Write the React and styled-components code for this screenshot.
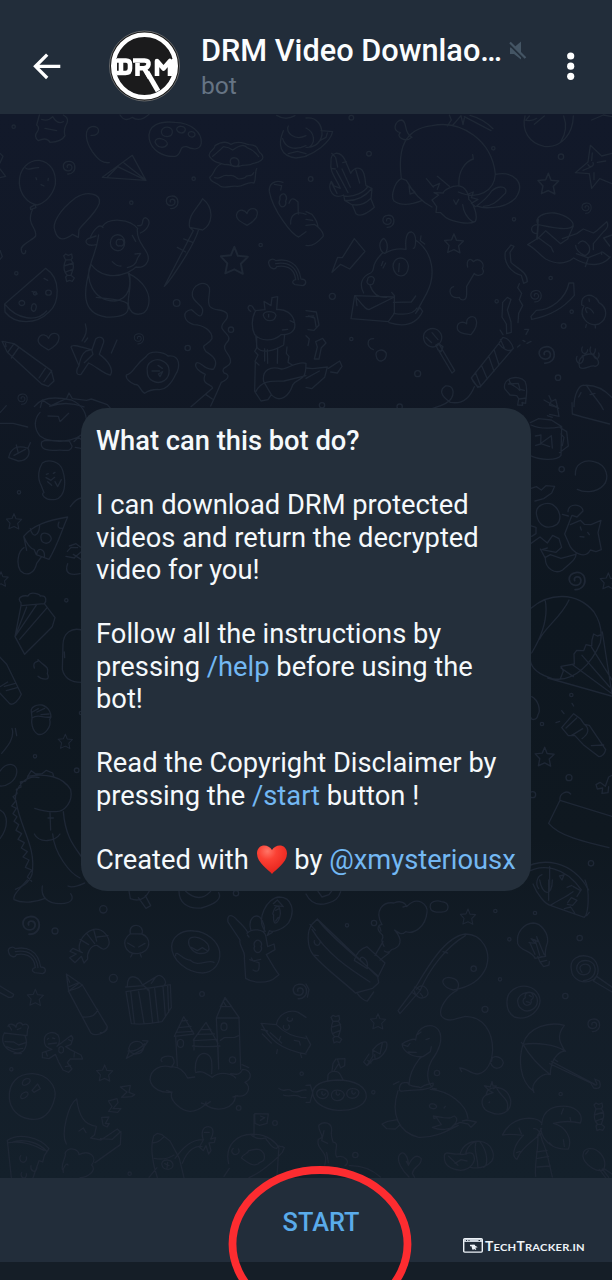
import React from 'react';
import styled, { createGlobalStyle } from 'styled-components';

const GlobalStyle = createGlobalStyle`
  * { box-sizing: border-box; }
  html, body { margin: 0; padding: 0; background: #151e27; }
  body { font-family: Roboto, "Liberation Sans", sans-serif; overflow: hidden; }
`;

const Screen = styled.div`
  position: relative;
  width: 612px;
  height: 1280px;
  display: flex;
  flex-direction: column;
  overflow: hidden;
  background: #151e27;
`;

const Header = styled.header`
  height: 114px;
  flex: none;
  display: flex;
  align-items: flex-start;
  padding: 30px 31px 0 31px;
  background: #222d3a;
`;

const IconButton = styled.button`
  border: 0;
  padding: 0;
  background: none;
  display: flex;
  margin-top: ${(p) => p.$top}px;
  flex: none;
`;

const Avatar = styled.div`
  width: 72px;
  height: 72px;
  margin-left: 47px;
  flex: none;
`;

const Heading = styled.div`
  flex: 1;
  margin-left: 20px;
  padding-top: 3px;
  display: flex;
  flex-direction: column;
`;

const TitleRow = styled.div`
  display: flex;
  align-items: center;
  gap: 7px;
  height: 36px;
`;

const Title = styled.h1`
  margin: 0;
  font-size: 30.7px;
  line-height: 36px;
  font-weight: 500;
  color: #fbfdff;
  white-space: nowrap;
`;

const Status = styled.div`
  font-size: 24.6px;
  line-height: 30px;
  margin-top: 2px;
  color: #667484;
`;

const Chat = styled.main`
  position: relative;
  height: 1064px;
  flex: none;
  display: flex;
  flex-direction: column;
  align-items: center;
  padding-top: 294px;
  background: linear-gradient(180deg, #12192a 0%, #111825 25%, #0e1720 46%, #0f1820 68%, #131d28 82%, #14202b 100%);
`;

const Wallpaper = styled.svg`
  position: absolute;
  inset: 0;
  width: 612px;
  height: 1064px;
  fill: none;
  stroke: #1e2735;
  stroke-width: 4;
  stroke-linecap: round;
  stroke-linejoin: round;
`;

const Bubble = styled.section`
  position: relative;
  width: 450px;
  height: 483px;
  padding: 16.8px 0 0 15px;
  border-radius: 26px;
  background: #242f3b;
`;

const Paragraph = styled.p`
  margin: 0 0 32.27px;
  font-size: 27.3px;
  line-height: 32.27px;
  font-weight: ${(p) => (p.$strong ? 500 : 400)};
  color: #f5f9fc;
  white-space: nowrap;
`;

const Link = styled.span`
  color: #73b8f3;
`;

const HeartEmoji = styled.svg`
  width: 32px;
  height: 32px;
  margin: -4px 0;
  vertical-align: -2px;
`;

const Footer = styled.footer`
  height: 84px;
  flex: none;
  display: flex;
  justify-content: center;
  align-items: flex-start;
  position: relative;
  background: #222d3a;
`;

const StartButton = styled.button`
  border: 0;
  padding: 0;
  margin: 29px 0 0 30px;
  background: none;
  font: 500 25.3px/32px Roboto, sans-serif;
  color: #5aabea;
`;

const Watermark = styled.div`
  position: absolute;
  left: 463px;
  top: 59px;
  display: flex;
  align-items: center;
  gap: 2px;
  height: 17px;
  color: #eef3f8;
`;

const Brand = styled.span`
  font: 700 10px/16px Lato, sans-serif;
  white-space: nowrap;
  letter-spacing: 0.2px;
  transform: translateY(1px) scaleX(1.115);
  transform-origin: left center;
  b { font-size: 12.4px; font-weight: 700; }
`;

const Marker = styled.svg`
  position: absolute;
  left: 220px;
  top: 1156px;
  width: 200px;
  height: 124px;
`;

const star = 'M0-27 7-9 27-7 13 7 17 27 0 18-18 26-14 6-27-8-7-10Z';
const spiral = 'M-3 2C-7-7 9-10 11 1 12 17-13 16-15 0-16-19 14-22 19-4 23 13 10 23-2 22';
const heart = 'M0 27C-15 18-38 8-30-9-23-25-5-18 0-8 6-29 33-27 31-8 30 9 13 20 0 27Z';
const candy = 'M-14-36-8-42 0-38 10-42 12-30 8-25Q20-10 12 10L8 22 18 30 12 40 3 37-5 41-8 27-3 22Q-20 5-8-24ZM-8-24 8-25M-13-6 15-15M-10 13 14 3M-3 22 8 22';
const chick = 'M-17-28C-25-63 27-60 18-27 48-16 46 27 5 32-33 34-48-5-17-28ZM-17-28 18-27M-25 0-5 12M27 1 8 12M-12 34-16 42M13 34 16 42';
const rainbow = 'M-60-22C-65-35-48-43-40-33-8-40 28-30 36 22 52 22 55 36 42 42L18 39C6 33 12 25 20 24 16-15-15-20-37-15-41-4-57-9-60-22ZM-40-24C0-31 24-12 28 24';

const sheets = [
  {
    x: 0,
    y: 110,
    paths: [
      'M118 15 110 45Q120 53 112 65 100 80 115 92 140 80 150 97 185 96 195 77 190 60 198 45 210 25 190 15M125 28Q145 35 158 20 173 45 190 35M135 55 170 62M360 15Q375 38 397 22 420 38 447 13',
      'M273 76C303 80 303 45 275 50 250 57 257 95 277 125 295 150 307 160 328 158M307 202 397 136 438 211ZM353 170 438 211 372 159M353 170 323 200',
      'M448 88C440 45 480 32 525 37 575 39 606 67 604 99 600 123 575 118 560 110 535 107 548 132 526 139 487 142 454 119 448 88ZM484 66C485 45 520 48 517 67 516 84 486 84 484 66M530 58C530 45 557 46 556 60 552 74 533 70 530 58M565 74C563 61 585 63 585 75 582 84 569 84 565 74M465 96C467 76 504 88 502 103 493 117 472 114 465 96',
      'M629 140C620 125 647 118 645 107 670 90 684 98 693 103 717 88 735 103 747 104 780 105 770 125 784 132 798 147 777 158 760 160 747 170 734 162 720 168 701 175 691 160 675 164 653 157 642 158 629 140ZM663 162C640 172 646 190 629 202 632 220 652 216 660 228 675 238 691 225 711 229 730 231 742 213 762 219 770 205 763 188 770 176M638 139Q660 121 670 110 687 112 698 120 731 97 741 113 760 119 776 140M644 203C670 210 660 192 685 197 714 190 699 216 735 203 741 190 754 205 761 188M691 157C688 138 716 139 717 158 715 175 695 173 691 157',
      'M850 62C833 103 839 138 888 144L918 139M865 48C854 66 884 94 918 77M848 86C855 113 883 123 918 107M830 16Q857 33 885 17M865 131 892 124 918 131',
      'M58 220C56 174 88 150 118 151 151 157 169 184 166 223 158 257 133 281 111 285 80 279 61 252 58 220ZM105 284 91 292 92 299 108 293ZM98 297C77 345 111 350 107 378 98 391 58 405 64 421 66 437 78 432 77 422M77 174C82 183 100 172 116 173M108 203 110 209M145 205 144 212M123 224 132 228',
      'M165 363C155 342 177 301 226 264 261 241 304 250 298 280 287 312 247 342 237 359L235 382 218 373C196 390 174 396 165 363Z',
      'M288 404C252 412 252 386 270 384 285 350 301 342 309 353M270 384 288 378M307 350C324 321 391 326 413 356M413 347C437 350 420 326 436 323 458 333 444 359 421 369M296 375C290 423 278 438 272 463M412 358C410 391 430 407 441 429 453 453 435 476 408 471 396 482 387 485 382 488C337 507 296 494 273 463 250 542 241 609 318 621 362 623 394 614 382 580 362 566 322 567 289 562M272 463C253 504 279 574 344 573 390 567 395 520 385 490 426 510 455 547 445 587 436 622 392 620 387 590 377 568 398 540 388 490M331 399C331 367 373 366 374 397 375 431 333 430 331 399M360 389A8 10 0 1 0 360 407 8 10 0 1 0 360 389M397 376 407 394M405 432 422 430 413 444M413 444C407 466 397 469 382 473M337 455Q351 470 363 468',
      'M569 352C561 318 594 293 608 266 645 296 637 343 608 360ZM569 352 580 362 493 529C505 520 582 409 595 361M551 387 578 397M532 412 557 426',
      'M849 217C822 208 806 223 808 245 819 302 876 375 896 381L918 365M823 223 845 227 842 240M840 269A10 13 0 1 0 857 273 10 13 0 1 0 840 269M867 280Q875 255 894 276L895 312M872 342C870 310 894 303 918 313',
      'M14 582 137 475C184 505 179 578 147 606 109 644 46 645 15 606ZM14 582C52 630 111 637 140 603M132 505 143 511M96 544 112 552M137 548A8 7 0 1 0 154 548 8 7 0 1 0 137 548M57 579A8 7 0 1 0 74 579 8 7 0 1 0 57 579M95 590A7 9 0 1 0 108 595 7 9 0 1 0 95 590',
      'M6 694 42 701 154 782 162 813 145 829 125 822 22 727ZM42 701 24 726M55 714 34 744M155 782 132 815M16 696 18 710M136 775 117 804',
      'M287 687C300 675 313 685 311 697L298 733C325 751 342 781 331 795 318 796 283 766 266 759L243 793C226 798 228 779 237 767L213 711C215 702 237 709 276 719ZM237 767C240 748 247 731 258 723L275 719 279 733 253 758M256 642C263 663 257 676 246 693M263 684 254 696M351 690 334 729',
      'M438 740C450 718 493 727 504 738 543 733 540 774 527 793 514 823 493 843 473 838 456 839 448 840 434 850 419 843 419 819 405 824 391 818 376 806 379 795 400 792 402 766 438 740ZM442 786C436 754 470 742 490 754 513 765 512 798 494 811 468 828 441 807 442 786M456 783 479 783M474 766 487 775M475 792 488 785 480 800Z',
      'M577 557C573 524 616 507 628 533 632 551 619 575 630 590 645 606 670 594 681 611 690 632 660 635 666 655 678 674 698 681 679 699 660 721 698 735 691 758 689 772 660 770 672 789 690 793 688 807 664 817L650 849 632 888 M577 557C581 579 612 586 608 604 603 635 585 605 574 599 546 603 548 633 581 644 609 645 637 661 636 686 620 713 600 698 618 725 652 745 651 761 641 777 614 784 601 750 589 759 580 772 601 786 616 793 601 825 636 822 638 834L573 890M618 854 637 867',
      'M752 604C744 600 741 591 749 586 763 586 757 598 767 602L795 599 792 574 813 587 816 563 833 560 830 599C857 596 878 612 883 635 891 665 868 674 843 674 817 697 782 693 764 674 754 654 754 624 767 602M767 675 771 712C786 733 823 722 851 705L854 673M770 681 770 714 764 724 774 735 765 754 777 765 M794 716 794 753M833 714 832 760M802 719 803 760M861 711 859 730 867 739 864 757 877 765M766 754 764 844 783 873 804 869 814 854C839 881 868 858 878 825 897 798 918 820 918 760 891 752 860 779 844 777 812 767 785 779 791 815L814 854M768 844C788 805 827 816 853 813M852 813 918 797M790 616C789 601 824 601 828 616 823 638 796 637 790 616M806 613 806 621M870 632 881 637M847 660 863 658',
      'M121 892 127 870 153 887 200 865 207 849 217 866 260 871 274 867 322 884 333 897M149 889Q200 871 252 891',
      'M0 130 9 139 0 159M0 177 17 199 0 203M0 421 7 440 0 448',
    ],
    marks: [
      [spiral, 205, 170], [spiral, 514, 274], [heart, 741, 319], [star, 703, 451, 1.5], [candy, 205, 474],
      [heart, 146, 693], [spiral, 415, 684, 0.8], [spiral, 66, 865, 0.8], [rainbow, 867, 485],
    ],
    dots: [[41, 50], [394, 278], [581, 206], [782, 405], [49, 490], [530, 579, 10], [693, 659, 8], [563, 714, 8], [105, 550, 5]],
  },
  {
    x: 306,
    y: 110,
    paths: [
      'M0 24C34 20 49 47 48 75 42 105 17 114 0 112M45 62 80 65C71 103 19 131 0 138M0 54C27 67 29 99 9 112M64 69 60 82 43 91',
      'M286 206C266 215 253 259 264 273 286 289 320 283 347 272M286 206C274 112 297 57 378 47 469 28 558 95 568 192 566 243 515 272 457 246M315 83C298 98 268 80 283 68 257 64 267 31 287 30 306 35 291 70 318 82M286 206 301 211Q333 269 378 291M309 228 327 247 312 252ZM459 228C455 181 480 154 502 147M502 147 500 134M568 193C621 183 661 217 629 264 599 295 551 294 531 293L512 288C528 276 545 263 557 243 578 224 607 229 598 250 581 264 566 289 532 289M361 206 382 231M394 199 430 229M381 229 401 220 394 238M378 270 398 255 384 248 412 249C413 240 439 226 460 228 479 231 490 254 488 268 501 278 517 316 508 334 486 348 435 332 420 323L404 308 390 307 392 290ZM487 252 502 246 496 263 516 268 496 280 509 290M443 270 450 283 458 268M424 48 436 30 430 15M441 45 465 17 471 44 475 24M475 20 555 62M492 16Q531 26 561 56M470 284Q474 319 502 337',
      'M657 18C646 62 669 99 714 109 768 116 801 69 802 18M670 18 659 31M685 43 715 18M773 18Q788 58 764 96M662 31Q680 34 692 25',
      'M853 106 887 138 918 130M853 106 846 156 808 188 850 191 857 235 881 206 918 221M859 129 857 151M831 181 855 171M864 209 864 188M874 157 899 153M846 163A8 8 0 1 0 861 158',
      'M75 156C72 125 102 119 118 152L134 190C147 167 168 171 174 192 181 216 176 229 184 228L198 236 195 267 205 292Q168 325 150 311L139 285 116 271 113 255C81 270 63 236 76 214L84 228 103 235C89 202 70 186 75 156ZM89 143 95 171M108 177 133 232M91 182 126 248M149 179 161 219M75 215 93 250M114 258C145 263 175 246 186 229M116 271C154 275 179 257 196 237M140 284C162 288 181 278 193 266M87 140 77 130M76 175 88 177M121 155 110 158',
      'M0 305 18 313Q35 334 36 351 55 368 51 380 23 412 0 406M0 328 20 331M0 346 25 343 37 352',
      'M145 386 177 424 131 477 104 463 78 487 95 442 109 443Z',
      'M233 385C213 398 223 426 235 430 M233 385C250 399 244 427 235 430M236 430C254 420 275 414 300 418 297 390 301 364 317 366 335 373 329 414 322 415M329 390C383 428 390 497 362 550 M345 378 343 392 356 402M229 430C187 470 213 477 194 489 166 500 159 524 173 549M261 469C262 438 302 434 307 467 309 505 265 510 261 469M280 460 278 485 M226 467 231 454M231 474 239 459M185 510A10 9 0 1 0 203 514 10 9 0 1 0 185 510M192 526Q205 565 242 562M257 547 266 558M146 557 265 561 265 610 247 635 135 626ZM146 557C167 581 180 602 190 598L265 561M150 565 153 587M262 577 316 576 329 558M263 610C303 617 324 609 333 594 M362 550 329 610 342 593 350 604Q323 661 249 638',
      'M485 471C480 450 493 441 502 455 520 439 538 463 529 475 542 496 511 502 505 490L482 529 482 551C482 577 462 571 460 562 431 568 423 535 443 530 459 530 461 546Z',
      'M598 426 615 405 624 409 612 427 615 457C632 476 664 483 664 515L653 520 646 496C617 488 592 461 598 426ZM675 619 691 601C734 601 780 565 789 519L803 519 805 556C779 587 736 617 677 628ZM590 577 604 562 615 568 604 600 615 636 616 667 602 671 601 642 588 621ZM640 521 635 533 647 550 640 569 650 586 638 610 636 638M656 658 668 658 660 673M635 711 642 705M651 691 657 695M663 700 675 694',
      'M578 701 590 683C605 681 619 702 622 715L522 831Q508 830 496 804L578 701ZM578 701C591 718 611 729 622 715M564 718 579 765M548 738 564 784M526 765 544 807M508 787 524 828M496 804 516 833M583 688 595 714M505 830C489 870 464 883 433 877 403 857 400 840 418 828 442 825 446 847 436 865 427 883 395 890 374 897M591 674 582 660',
      'M353 686C349 659 379 650 395 660 413 675 410 694 394 707 376 717 356 706 353 686ZM389 706 398 700 446 782 438 789ZM378 668 396 689M360 682 377 698M400 702 411 710 405 725 395 719',
      'M697 344C681 321 715 306 746 309 782 315 804 335 801 347 790 365 734 351 697 344ZM697 344C671 343 670 371 694 371M697 328 692 387 665 404C687 415 697 431 719 447 746 461 774 467 803 444 850 473 889 468 913 441M697 344 694 381 735 411 742 426M694 387 719 362 764 401 785 387 802 348M769 386 812 371 832 357 862 369 874 361 902 335Q912 350 891 367L862 401 862 419M817 401Q831 382 849 408 856 428 837 437 809 425 809 406M893 384 918 375M893 384 911 408M838 470 847 443 890 426 911 442M887 433 886 426M811 431 845 443',
      'M827 585C822 553 862 543 878 577 905 592 907 626 879 642 846 652 816 619 834 588ZM843 608C829 584 852 592 863 609M850 574 849 567M841 644 839 652M868 644 868 654M878 574 870 564',
      'M821 772C812 744 836 731 854 732 877 741 886 765 868 769 854 762 835 784 821 772ZM813 739A10 14 0 1 0 829 737M829 711A9 12 0 1 0 845 719M854 711A8 13 0 1 0 868 717M864 731A8 11 0 1 0 878 729',
      'M211 739C204 720 231 713 241 730 242 755 214 762 211 739M202 719C180 711 182 685 203 686 222 708 219 714M222 718C200 695 233 670 252 677 269 689 246 719M240 718C250 696 281 687 290 711 286 733 247 724M247 736C277 733 298 744 285 766 267 774 246 762 239 748M239 754C259 767 282 789 261 798 240 803 231 772 235 764M221 755C235 785 218 810 203 801 184 793 205 760M213 748C202 777 173 785 174 764 178 747 196 742 207 744M207 732C183 724 154 735 167 747 178 747 194 739 210 742M207 793 194 823M146 825 187 830 222 814 247 820 226 831 209 844M141 830 152 838 191 840 225 840M145 838 153 890M206 859 212 888M142 790C137 789 139 831 180 822 180 802 159 797 142 790M188 825Q188 814 208 805',
      'M596 836C589 803 638 792 657 814 668 839 659 859 659 880L648 877 650 886 635 885 638 866 632 857 612 855ZM610 807C606 825 634 829 641 841M607 822 637 820 642 838 655 841M640 867 661 864',
      'M804 890C804 854 819 823 835 826 866 824 896 839 918 863M842 827C868 869 881 874 892 899M825 848 818 861M852 854 867 850M729 857 736 873 730 885 755 892 749 868 739 873M857 30 892 15 918 20',
      'M0 602 31 606 39 645 24 661 6 659M7 618 26 624 30 650M0 620 23 618M0 677 10 687 6 707M50 685 60 699 46 713 39 747 25 747 34 711 29 695ZM0 774 20 776 64 771 56 802 17 836 0 832M67 775 101 753 108 769 94 789 74 786M0 805 40 783',
    ],
    marks: [
      [star, 727, 221, 1.15], [star, 444, 400, 1.05], [heart, 485, 649, 1, -22], [spiral, 245, 331, 0.95], [spiral, 840, 292, 0.8],
      [spiral, 688, 556, 0.9], [spiral, 719, 731, 1.3],
    ],
    dots: [[136, 23, 7], [189, 131, 7], [14, 207, 7], [562, 115], [765, 140, 8], [624, 328], [734, 504], [79, 559, 9], [572, 574], [797, 605], [773, 648, 7], [136, 687, 5], [335, 791, 9], [756, 803, 8], [48, 886, 8], [281, 890, 8]],
  },
  {
    x: 0,
    y: 400,
    paths: [
      'M103 20C126-12 178-8 214 0 248 15 267 44 257 92 229 130 152 132 119 107 99 81 104 55 120 37M125 126C119 149 141 151 169 151 193 148 213 159 216 139M125 126 134 121 208 123 216 138M144 48 175 49 180 65 206 40M222 125 235 112 250 123 247 146 226 142M0 70 39 70 83 81M0 38 19 17',
      'M26 173C31 147 49 133 84 145 93 160 82 184 55 183ZM84 145 91 128M42 166 76 148M54 156 49 135',
      'M124 257C109 231 118 203 127 189 145 176 180 183 188 211 200 248 195 291 167 298 134 304 120 280 132 278ZM139 223 145 221M160 220 165 217M138 233 153 241 164 232M165 245 173 260 184 239M143 245 155 256',
      'M71 409C100 374 144 361 203 351 185 391 174 433 147 478L109 464 102 448Q87 447 71 409ZM91 386C97 416 117 409 119 377M110 463C113 438 136 447 133 471M123 407C126 393 151 399 154 416 151 436 120 435 123 407M177 366Q168 387 189 385M72 443C54 453 48 491 61 512 81 532 104 519 110 490L124 471M71 409 80 451M211 320Q228 295 244 294M202 454 213 442 233 443M208 438 228 431 241 441M198 469 223 474M222 474 243 456M203 491C191 523 215 526 240 521M220 463 243 478',
      'M63 608C48 593 68 585 84 588 92 572 120 583 121 588 142 585 139 605 133 611L63 617ZM63 617 45 710 74 763 157 680 165 653 133 611M45 710 110 614M59 718 142 622M45 710 80 621',
      'M103 804C95 780 119 789 114 779 131 799 149 798 142 821 155 846 122 837 114 829 103 821 107 811M115 788 112 777M120 806 138 830',
      'M0 772 20 793 64 883C57 900 40 918 29 911L0 880M13 859 46 850M19 872 54 862M0 860 23 846M246 690C213 681 190 700 189 733L187 808C194 838 220 847 244 847M193 756 194 773',
      'M94 935C91 922 109 912 126 915 150 922 153 944 153 951L149 958C156 982 132 1007 114 1003 94 991 94 963 96 954ZM96 954C116 939 128 956 151 951M97 936 115 926M111 936 134 925M123 944 147 942',
      'M36 985C45 1013 23 1039 5 1060M46 985 50 1007M0 1113C24 1081 54 1092 50 1119 46 1145 18 1160 0 1158M0 1230C25 1243 26 1280 0 1316',
      'M83 1129C137 1119 188 1129 212 1169 220 1207 193 1234 168 1235 144 1236 119 1230 104 1225M46 1205C44 1150 86 1124 117 1133M48 1202C59 1284 110 1337 96 1423 87 1450 65 1460 46 1468M83 1132 77 1143 61 1146 63 1161 49 1168 51 1181 39 1190 48 1202 35 1218 49 1225 39 1241 51 1250 42 1264 56 1274 48 1291 65 1301 54 1318 73 1328 64 1344 82 1355 69 1371 87 1380 76 1402 95 1410 82 1431 95 1444M83 1129 94 1112 107 1122 126 1121 139 1111 158 1119 161 1129M150 1239 152 1290M144 1254 160 1254M190 1235C196 1310 223 1340 245 1371M158 1302C163 1360 209 1420 240 1434 M103 1302C119 1332 166 1324 180 1302 184 1293 169 1290M198 1266 214 1256 230 1277 216 1291 200 1284M207 1255 222 1274M181 1155 189 1161M145 1175 156 1193M219 1465 269 1451',
    ],
    marks: [[star, 42, 364, 0.85], [star, 196, 1024, 0.8], [star, 3, 537, 0.8]],
    dots: [[57, 277], [199, 601, 5], [105, 1069], [230, 1111, 7], [243, 939, 5]],
  },
  {
    x: 522,
    y: 400,
    paths: [
      'M150 8 151 42 182 51 263 72M66 0 110 25M83 43 111 49 105 16M76 47 91 52',
      'M25 68 50 56 88 60 119 80 117 166C102 185 50 179 25 167M115 83 134 95 139 138 112 158M117 102 126 112 121 137M27 75C60 91 98 84 119 80M40 108 57 105 56 132 41 136M58 129 88 107 91 144M57 131 83 140',
      'M160 225C158 189 190 178 216 185 257 195 262 235 245 255 221 283 180 276 166 268 156 255 158 240M215 185 211 165 222 172 219 151 238 175 263 163 247 187 263 194 237 196M184 203 184 207M208 199 209 204M232 205 232 211M175 228 175 234M198 220 198 227M222 228 222 235M247 224 247 231M183 249 183 255M208 245 208 252M231 251 231 258M195 264 195 267',
      'M25 266 43 260 58 270 72 257 98 259 89 279 65 296 39 303M44 346C37 313 74 306 91 313 117 330 119 359 105 373 76 392 50 377 44 346M25 377 42 382 42 401 29 409M27 430 54 411 76 429 92 406 111 416 119 442 102 457 60 449 76 444M55 447 69 473 85 464 117 475 161 463M70 471C68 507 101 524 122 510 142 491 165 477 162 459M138 335C139 307 182 311 183 333L165 351 150 346 141 368 128 402 140 429M145 374 175 361 187 373 207 374 237 361 228 398 238 449 222 455 205 450C190 479 150 459 140 430M175 381 178 390M174 410 186 411M197 397 202 404M121 343 139 348',
      'M28 624C80 579 164 573 216 636 231 659 243 689 235 728 211 786 159 849 91 836 52 824 28 804 25 782M70 603C80 660 50 724 29 759M141 600C117 652 71 680 53 717M235 705 226 708 215 702 210 720 209 738 192 734 185 752 164 751 156 762 157 792 117 799 124 813 115 836M241 696 270 882M209 742 270 840M150 793 268 880M180 766 263 861M77 834 268 888M117 804 154 830',
      'M29 890C49 900 57 931 48 944 45 963 27 960 27 953M119 983 155 941 175 956 187 973 202 976 251 1049Q246 1070 231 1070L184 1034 158 1006 139 1007ZM132 984 164 954M182 986 148 1007M187 973Q211 993 180 1016M208 1037 245 1035M119 932 126 941M113 964 102 968M150 910 155 918',
      'M222 1154 234 1147 250 1159 260 1131 270 1126M222 1154 226 1167 242 1164 240 1180 258 1178 260 1160',
      'M80 1270 114 1201 270 1249M80 1270C110 1307 185 1326 261 1343M114 1201C111 1182 134 1168 146 1182 140 1202 124 1200M140 1199 129 1230M151 1202 158 1223M178 1204 148 1225 97 1225M100 1240 135 1259M177 1298 184 1246 225 1231M196 1223 230 1289M180 1267 212 1268M178 1297 194 1298M207 1288 200 1310M84 1262 116 1280M135 1201 151 1205M123 1219 163 1212',
      'M0 1408C60 1370 150 1380 200 1470M10 1420C60 1388 130 1400 178 1470M83 1400 83 1470M60 1424A22 26 0 0 0 50 1466M112 1428 126 1425 120 1440ZM135 1462 150 1456',
    ],
    marks: [[spiral, 162, 539, 1.35], [star, 68, 1070, 1.05], [star, 259, 543, 0.9]],
    dots: [[119, 208, 8], [148, 885], [60, 972], [141, 1133, 9], [32, 1184, 9], [207, 1390, 8]],
  },
  {
    x: 0,
    y: 880,
    paths: [
      'M82 0C60 25 38 45 42 59 70 73 112 65 135 55M127 18C121 53 145 72 183 71 213 70 223 58 212 41M204 18C218 26 239 16 254 9',
      'M387 33 391 56Q430 70 448 33M415 53 438 85 452 77 436 47M537 34C537 65 559 88 604 84M656 38Q671 65 604 84M557 34Q597 71 632 34',
      'M247 218C225 211 242 159 281 148 311 144 330 173 327 193 316 218 302 204 291 196 272 195 260 219 263 237L252 249 244 229 225 248 209 233 229 222 210 214 219 205ZM240 178 266 194M260 160 284 191M281 149 290 183M291 171 324 167',
      'M515 199C516 173 542 148 583 153 618 155 654 182 659 215 663 250 642 276 608 279 560 278 514 239 515 199ZM566 184C566 165 601 167 623 192 635 214 618 223 595 220 578 217 564 197 566 184ZM574 202 592 212 607 203 623 213M527 227C526 205 551 243 570 240 594 264 622 237 642 247 654 247 657 222M538 190 544 198M553 232 560 225M617 250 626 253M568 263 573 267M543 179 550 172M635 199 640 209M528 180 528 187',
      'M720 180 684 126C680 99 698 104 712 121 729 137 740 148 743 158M753 151C742 117 764 102 779 111 793 125 796 149 791 158M741 160C758 143 790 148 797 166L803 200 822 192 825 209 799 224C816 252 827 272 837 284L828 291C806 313 757 309 737 295L733 234C738 214 715 197 720 180M764 199A11 12 0 1 0 783 199 11 12 0 1 0 764 199M754 234 760 243 782 238M749 239 774 247M777 248Q781 283 759 270M742 165 747 171M796 154C767 118 800 53 838 51 875 52 887 92 866 128 848 150 817 158 808 152L802 166 817 157M818 102C826 72 841 71 841 102 836 131 818 144 821 104M820 71 832 60 850 80M823 77 847 79M827 91 837 86M827 123 835 112',
      'M378 335 487 318 511 314 514 383 486 425C456 431 419 434 394 431L378 335ZM382 317C382 276 415 288 426 313M431 313 474 287C482 281 509 307 490 318M428 313 445 332M392 333 403 430M416 335 432 430M447 330 458 429M464 326 475 427M489 319 496 408M503 319 506 397M377 321 430 317 446 328M466 293 454 310',
      'M199 282 247 315 322 440C318 461 286 471 272 458L206 334ZM202 291 209 307M205 334 239 308M206 334C223 323 228 332 247 315M249 411C274 413 289 403 293 388M301 458C313 460 323 450 322 440M208 320 233 309',
      'M24 440C27 425 45 435 48 442 49 425 65 425 68 435 82 427 89 440 83 447L81 466M13 459 81 467M13 459C0 484 13 510 45 517 78 527 84 488 75 467M28 438 35 450M52 449 63 444M15 485 41 486 56 495 80 487M20 500 42 509 68 505M42 521 64 521',
      'M133 478C135 455 161 453 174 465 182 480 177 493 171 499L214 466 219 475 213 493 197 500 211 509 243 525 248 537 211 537 202 548 216 567 206 577 189 570 175 544 166 523 147 536 127 533 127 518 156 508C137 503 132 496 133 478ZM142 478 146 475M158 474 164 476M145 492 170 489M177 509A7 7 0 1 0 190 510 7 7 0 1 0 177 509M196 560 212 557M222 531 223 519M206 479 214 483M138 517 142 528',
      'M386 506C391 480 424 476 432 501 426 528 395 528 386 506ZM428 482 444 483 426 509 379 535 387 517M384 513Q409 517 434 491',
      'M523 469 551 410 582 462 523 469ZM544 423 562 421M535 443 573 439M528 457 579 454M580 480 618 427 654 490M602 449 633 448M591 463 643 462M580 482 652 478M577 498Q620 502 660 498M649 414 675 352 718 414ZM661 380 675 355 695 379ZM669 363 679 379M649 414 656 564M717 414 722 568M527 470 532 558M582 476 582 510M586 574C584 540 595 520 614 520 640 525 636 553 635 581M661 481 673 473 704 472 718 466M654 498 656 567M533 490A9 9 0 1 0 550 490 9 9 0 1 0 533 490M663 440A9 11 0 1 0 681 440 9 11 0 1 0 663 440M688 540A9 9 0 1 0 707 540 9 9 0 1 0 688 540M486 545C475 536 498 523 517 531 528 546 520 556 513 561M513 561C482 552 451 568 450 599 454 626 486 641 516 636 505 659 542 691 569 694 593 695 607 682 616 674 650 698 703 689 707 647 745 656 756 618 735 607 761 593 752 569 728 568 718 590 705 581 692 581M563 594C550 569 531 558 513 561M563 594 584 591M587 578C606 570 618 581 637 592 662 570 700 584 707 594M726 554 746 563M513 636 500 631M616 675 618 666M699 651 713 647M604 669 618 674 631 665',
      'M783 430 829 434C835 400 869 387 895 397L918 412M784 431C809 479 842 509 918 522M829 434Q863 470 918 475M787 462 814 489M832 509 830 520M901 520 905 533M811 458 845 489M842 469 838 479M851 437A9 9 0 1 0 866 435M864 413A8 6 0 1 0 877 416M883 481 898 484 901 495M784 448 803 453',
      'M28 655C25 610 53 580 98 581 143 583 169 618 165 650 155 700 127 724 88 717 51 711 31 686 28 655ZM67 609C71 591 99 593 88 608 78 618 66 619 67 609M96 631 113 612 121 626 102 637ZM62 650C65 635 90 630 83 646 73 658 62 659 62 650',
      'M230 657C206 671 181 761 199 792 M230 657C237 709 253 735 289 739L284 764 272 774 303 780 352 747 363 758 361 794 285 848M301 776 337 778 363 754M187 869C183 845 202 827 195 820 206 797 236 808 237 824 268 808 294 831 275 855 292 873 261 893 240 893 M204 855C201 846 187 863 190 877M237 753 250 744 258 758M361 621 391 616 387 637 404 644 395 650 365 652 381 636ZM325 663 351 656 354 668 339 686 363 686 353 697 326 694 336 680ZM305 712 327 711 316 731 328 731 321 741 309 735Z',
      'M22 781C56 758 118 770 147 806L133 827 128 846 117 842 99 893M22 781 34 893M26 788Q78 780 132 811M39 786C77 775 119 790 139 813M62 827A10 12 0 1 0 79 831M93 857A8 12 0 1 0 111 863M65 878A8 10 0 1 0 79 881',
      'M461 768 472 760 486 764 510 783 538 835 552 893M461 768C451 799 457 830 462 858L472 893M458 788C476 790 487 775 492 770M463 835Q496 842 522 825M485 852C488 835 514 837 519 853 520 873 489 874 485 852M494 851 507 857M503 847 501 864M471 863 447 892M525 835C553 797 576 779 609 779M547 850C563 808 587 796 606 800M607 768C603 735 634 735 638 749 642 765 632 774 632 777L647 773 643 787 627 789 633 812 626 822 618 797 610 812 598 801 610 780ZM613 757 628 757',
      'M764 701 805 702 801 730 779 736 765 730ZM762 703 762 768M781 708 794 713 781 721M686 851C673 797 711 759 764 763 802 762 829 789 837 804 833 839 834 867 830 893M700 805A11 10 0 1 0 715 807M724 834C732 818 739 826 747 812 770 805 783 805 792 822 798 849 782 842 774 852 753 861 740 844 724 834M753 764C779 789 798 765 799 779 811 790 814 805 830 805 838 790 840 804 846 799L853 803 847 817C822 845 780 879 747 893M688 865 672 889',
      'M0 318 41 343Q40 354 26 352L0 338M837 625C850 640 862 621 875 633 890 643 903 627 918 630M850 645C867 654 887 637 902 652L918 653',
    ],
    marks: [
      [spiral, 90, 132, 1.4], [chick, 408, 189], [rainbow, 86, 239], [star, 106, 352, 0.9], [star, 314, 579, 0.9],
      [spiral, 897, 331, 1.15],
    ],
    dots: [[310, 88, 11], [165, 153, 9], [340, 295, 12], [606, 342, 7], [34, 568], [716, 684, 7], [389, 881], [905, 581], [825, 729, 7], [708, 40, 8]],
  },
  {
    x: 306,
    y: 880,
    paths: [
      'M0 42Q20 82 63 70 96 64 104 35M36 34 48 51 69 44 77 33M0 312 9 329 4 351M0 468 14 494 0 518',
      'M34 117 18 133C2 152 2 201 22 225 60 269 118 309 148 339L200 325 218 308 215 290ZM34 117C71 170 163 240 217 289M18 148C62 221 126 263 192 306M22 225 37 227M12 133 28 151M25 182A9 11 0 1 0 42 181M154 340C162 354 178 364 184 363L203 336M145 241C152 215 170 204 183 200M145 241 184 266C189 233 160 223 163 240M183 200 237 249 216 291M207 226 231 185M222 240 250 218M234 199C219 171 234 183 230 166 205 144 220 133 228 134 203 91 232 64 264 69 284 60 299 69 302 80 334 45 368 74 363 97 359 139 325 164 299 155 284 168 278 157 266 150 292 180 285 202 257 209 248 221 239 216 235 213M221 141 225 153M305 77 291 81M375 89C363 61 397 61 406 65 432 67 430 90 415 95 398 98 381 95 375 89',
      'M282 401 276 392 331 318C366 259 419 169 478 162 530 162 556 215 541 261 524 303 484 323 442 330 406 321 401 295 427 292 454 294 464 309 453 331 421 347 395 389 407 409 418 421 430 424 452 416L478 409C532 410 560 454 560 510 558 548 542 578 515 582 495 583 480 563 461 564M282 401 342 332C372 264 421 201 478 167M331 328C352 299 378 340 360 350 343 361 327 347 325 333M343 340 350 349M557 544C555 520 590 530 592 548 588 568 563 572 554 549M461 564 467 575M325 321 344 330M317 336 333 348M411 215 425 219',
      'M635 190C630 157 654 130 682 129 706 130 727 159 725 186 720 200 715 214 719 229L687 235C678 210 643 215 635 190ZM687 235 709 229M695 229 702 246 722 241M703 247 713 260 729 255 730 245M671 187 687 223M687 179 701 226M669 188 688 190 675 176 696 185 692 170 715 225',
      'M796 268C790 235 820 223 846 229 877 236 886 279 864 297 834 317 797 299 796 268M828 277C805 251 855 243 853 266 852 293 812 288 812 265 813 234 860 235 866 260 873 284 854 301 832 302M862 303 872 289 919 322M862 303 918 336',
      'M603 365C602 335 633 314 663 319 697 326 710 357 697 382 681 410 650 420 625 411 608 400 602 383 603 365M635 362C637 337 682 325 693 354 700 382 669 404 646 386 636 379 635 373 635 362M658 353A12 12 0 1 0 675 360 12 12 0 1 0 658 353M670 346 676 350M661 365 670 367',
      'M288 492C298 484 327 473 329 480 331 440 378 424 397 449 415 476 397 515 377 541 366 561 358 593 375 618M288 492C290 514 319 533 351 530L373 515 376 500M350 530 341 535C315 569 309 591 309 614M289 494 305 499 312 490M307 516 331 517M360 479 370 475M336 463 345 456M280 625C282 608 291 607 305 607 307 622 331 617 344 623 360 610 370 614 381 609 388 627 341 631 312 631 293 630 280 641 280 625M262 613 279 605M379 625 391 627M276 632C253 702 277 757 338 772 387 774 418 755 457 736M373 628C430 632 482 674 486 715M457 736C433 746 410 755 379 742L406 734 391 712 384 716 382 708 412 713 432 714 445 708C463 718 444 737 431 747M441 737 462 727 486 732 495 742 511 726 483 720 469 723M275 719 245 724 228 732 242 746 268 747 282 734M370 677C374 667 391 672 392 681 388 690 370 686 370 677M414 684 418 679',
      'M200 510C216 488 240 481 242 488 248 508 224 540 200 538M200 510 201 528 183 557 201 539M200 510 222 522 229 489M189 522 173 546 183 557M206 524 207 534M185 541 195 549',
      'M20 640C21 615 50 602 93 600 150 600 183 622 181 652 174 682 131 693 96 691 49 687 23 666 20 640M32 640C35 622 66 625 67 642 63 663 33 658 32 640M76 645C80 622 112 629 115 645 108 670 76 665 76 645M122 640C125 621 156 622 159 638 154 661 122 659 122 640M48 635A5 7 0 1 0 58 641M91 635A5 7 0 1 0 101 641M138 632A5 7 0 1 0 148 638M65 601 66 585C71 571 96 571 102 582L111 599M78 573 81 550 90 537M84 573 97 553M94 537 117 536 116 557 104 564ZM0 616 13 615 20 638 12 667 0 667',
      'M540 645C523 656 522 687 554 697 580 709 618 700 614 660 605 623 569 615 546 630L561 638 540 645 546 628 535 617 553 621 558 604 561 618 571 618 563 626M572 625C582 648 614 657 603 690M551 666 549 668',
      'M651 493C666 440 731 424 775 436 749 468 763 491 777 513 757 514 733 540 733 584 709 576 671 612 683 634 638 601 638 534 651 493ZM651 493C690 487 746 492 777 513M651 493C677 538 704 562 733 584M646 487 656 499M736 544 868 614M731 551 854 609 863 624Q890 630 880 603L865 597M743 537 755 545M868 602Q880 619 863 614M771 507 779 514M680 627 684 638',
      'M705 727C693 710 621 702 589 765 604 762 626 763 652 766M652 766C621 798 616 830 633 838 642 810 669 791 707 760M707 734C710 687 745 676 783 679 814 683 833 706 823 729 795 722 762 725 742 730 780 739 800 777 787 807 754 810 711 794 704 746M683 746C703 742 706 774 709 783 725 815 729 850 739 891M695 765C700 796 684 851 689 889M691 816 723 811M691 836 728 829M693 861 733 858M639 744 646 761M772 686 766 702M772 779 775 799M794 721 792 712M730 788 740 798M632 818 642 814M707 745 694 769',
      'M415 832C413 807 440 826 458 822 477 829 485 812 500 821 514 840 497 869 464 871 428 868 415 851 415 832M463 820C469 799 489 781 523 784 555 788 570 822 557 844 539 863 513 866 493 862M511 784C500 809 515 823 516 864M521 784C547 817 547 856 532 862M507 786C482 796 478 822 480 823M428 829 456 856M447 850 465 839 483 843',
      'M56 855C70 812 29 811 37 778 63 771 33 754 39 735 55 722 77 729 77 749 76 766 73 762 81 786 104 789 81 812 92 831 115 824 136 846 117 857M54 752 47 782 65 790M62 818 67 848M130 857C172 856 202 872 223 891M309 891C290 873 270 843 280 825 293 807 308 831 307 856 320 830 333 821 346 836 346 860 323 857 319 880L326 892M307 855 301 844',
      'M892 870C867 878 833 849 831 829 829 801 865 798 885 822 904 847 894 866 892 870ZM889 867 908 892M880 868 899 893M894 866 918 882M839 822 847 812',
      'M681 12C695 47 718 72 733 76M733 76 835 112C847 102 853 35 837 0M733 76C763 57 780 51 801 35M701 0C709 47 739 52 739 0M728 0 728 61M785 68 796 53 813 61 800 76 784 73M775 86 794 81 806 99M801 19 824 32 813 49M842 107 850 97',
    ],
    marks: [
      [star, 486, 110, 0.85], [candy, 89, 448], [star, 216, 424, 0.85], [candy, 878, 711], [spiral, 861, 433, 1],
    ],
    dots: [[204, 129, 8], [123, 136], [568, 93], [687, 99], [821, 174, 8], [503, 266, 8], [610, 178], [582, 298], [778, 348, 8], [537, 388, 9], [393, 579, 8], [202, 637], [148, 825, 8], [764, 642]],
  },
];

function Doodles() {
  return (
    <Wallpaper viewBox="0 114 612 1064" aria-hidden="true">
      {sheets.map((s, i) => (
        <g key={i} transform={`translate(${s.x} ${s.y}) scale(.33333)`}>
          {s.paths.map((d, j) => <path key={j} d={d} />)}
          {s.marks.map(([d, x, y, k = 1, r = 0], j) => (
            <path key={j} d={d} transform={`translate(${x} ${y}) rotate(${r}) scale(${k})`} />
          ))}
          {s.dots.map(([x, y, r = 5], j) => <circle key={j} cx={x} cy={y} r={r} />)}
        </g>
      ))}
    </Wallpaper>
  );
}

function Logo() {
  return (
    <svg width="72" height="72" viewBox="0 0 72 72">
      <circle cx="35.5" cy="36" r="35" fill="#171717" stroke="#77787a" strokeWidth=".8" />
      <circle cx="35.5" cy="36" r="31.2" fill="#1b1b1c" stroke="#fff" strokeWidth="4.6" />
      <path d="M38 42 49 61" stroke="#fff" strokeWidth="5" />
      <path d="M4 29h4v15H4zM63 29h4v15h-4z" fill="#fff" />
      <g fill="none" stroke="#fff" strokeWidth="4.6" strokeLinejoin="round">
        <path d="M8 30.5H17Q21 30.5 21 34.5V38.5Q21 43 16.5 43H8M12 31V43" />
        <path d="M24 30.5H35.5Q40 30.5 39.5 34.5 39 38.2 34.5 38.2H30M28.5 33V46M35 38 41 48" />
        <path d="M48 46V31L54.5 38.5 61 31V46" />
      </g>
    </svg>
  );
}

export default function App() {
  return (
    <>
      <GlobalStyle />
      <Screen>
        <Header>
          <IconButton $top={22} aria-label="Back">
            <svg width="31" height="28" viewBox="0 0 31 28" fill="none" stroke="#fff" strokeWidth="3.3">
              <path d="M29.3 14.3H5M16.2 2.6 4.5 14.3 16.2 26" />
            </svg>
          </IconButton>
          <Avatar><Logo /></Avatar>
          <Heading>
            <TitleRow>
              <Title>DRM Video Downlao…</Title>
              <svg width="18" height="20" viewBox="0 0 18 20">
                <path d="M1 6.5H5L12 .5V18.5L5 13H1Z" fill="#445564" />
                <path d="M0 3 15.5 18.5" stroke="#222d3a" strokeWidth="2" />
                <path d="M1 1.5 16.5 17" stroke="#445564" strokeWidth="2.2" />
              </svg>
            </TitleRow>
            <Status>bot</Status>
          </Heading>
          <IconButton $top={22} aria-label="More options">
            <svg width="20" height="28" viewBox="0 0 20 28" fill="#fff">
              <circle cx="9.7" cy="4" r="3.6" /><circle cx="9.7" cy="14.2" r="3.6" /><circle cx="9.7" cy="24.3" r="3.6" />
            </svg>
          </IconButton>
        </Header>
        <Chat>
          <Doodles />
          <Bubble>
            <Paragraph $strong>What can this bot do?</Paragraph>
            <Paragraph>I can download DRM protected<br />videos and return the decrypted<br />video for you!</Paragraph>
            <Paragraph>Follow all the instructions by<br />pressing <Link>/help</Link> before using the<br />bot!</Paragraph>
            <Paragraph>Read the Copyright Disclaimer by<br />pressing the <Link>/start</Link> button !</Paragraph>
            <Paragraph>
              Created with{' '}
              <HeartEmoji viewBox="0 0 32 32" role="img" aria-label="red heart">
                <defs>
                  <radialGradient id="heartFill" cx=".35" cy=".2" r=".85">
                    <stop offset="0" stopColor="#ff7567" />
                    <stop offset=".35" stopColor="#fb4134" />
                    <stop offset="1" stopColor="#e3201a" />
                  </radialGradient>
                </defs>
                <path d="M16 31C13 27 1 20 1 10.5 1 1 12 0 16 7 20 0 31 1 31 10.5 31 20 19 27 16 31Z" fill="url(#heartFill)" />
              </HeartEmoji>{' '}
              by <Link>@xmysteriousx</Link>
            </Paragraph>
          </Bubble>
        </Chat>
        <Footer>
          <StartButton>START</StartButton>
          <Watermark>
            <svg width="20" height="15" viewBox="0 0 20 15">
              <rect x=".7" y=".7" width="18.6" height="13.4" rx="1" fill="none" stroke="#edf2f7" strokeWidth="1.4" />
              <path d="M1 1H19V4H1Z" fill="#cbd3dc" />
              <path d="M3 2.5h1M5.5 2.5h1M15.5 2.5h1.5" stroke="#222d3a" />
              <path d="M7 7.5H12M9 7.5 10 11.5M10.5 11.5V7.5L13 9 10.5 9.5 13 11.5" fill="none" stroke="#edf2f7" strokeWidth="1.3" />
            </svg>
            <Brand><b>T</b>ECH<b>T</b>RACKER.IN</Brand>
          </Watermark>
        </Footer>
        <Marker viewBox="220 1156 200 124">
          <ellipse cx="320" cy="1244" rx="87.5" ry="74" fill="none" stroke="#fd2c30" strokeWidth="7.8" />
        </Marker>
      </Screen>
    </>
  );
}
